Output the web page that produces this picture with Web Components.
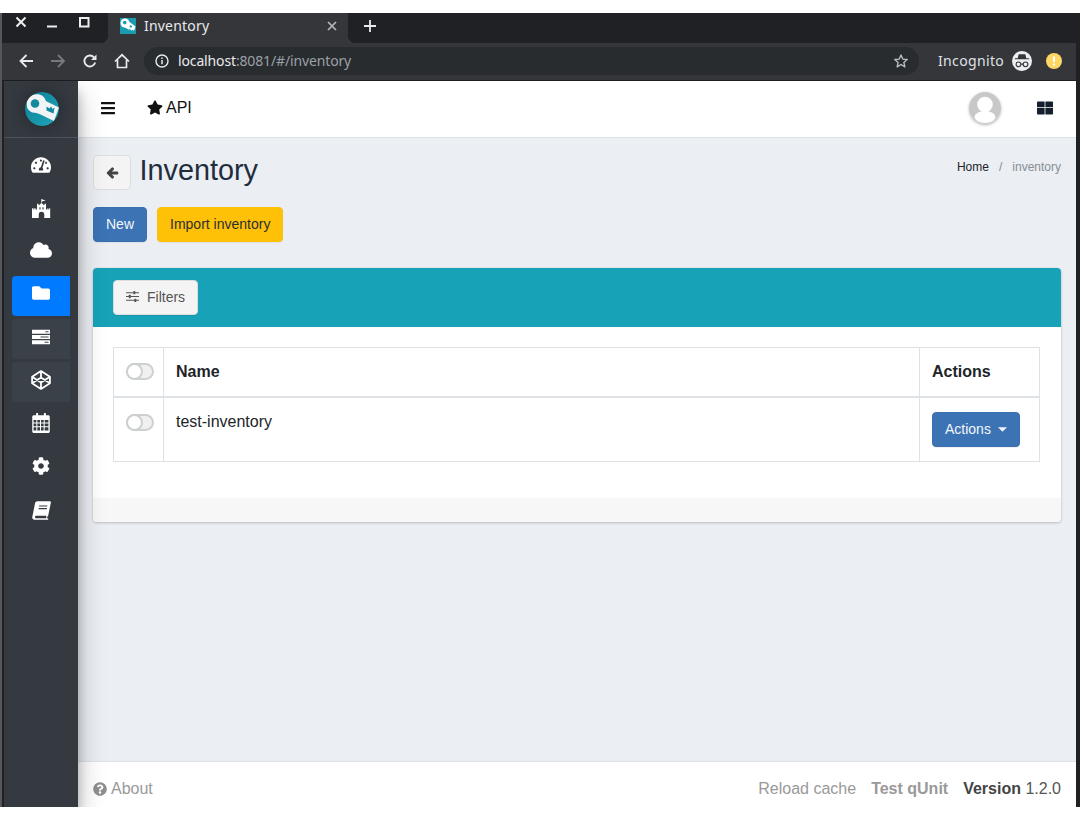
<!DOCTYPE html>
<html lang="en">
<head>
<meta charset="utf-8">
<title>Inventory</title>
<style>
  html, body { margin: 0; padding: 0; height: 820px; background: #fff; overflow: hidden; }
  body { font-family: "Liberation Sans", Arial, sans-serif; font-size: 16px; color: #212529; }
</style>
</head>
<body>
<browser-frame>
  <admin-layout>
    <side-nav slot="side">
      <nav-item icon="gauge"></nav-item>
      <nav-item icon="fort"></nav-item>
      <nav-item icon="cloud"></nav-item>
      <nav-item icon="folder" active></nav-item>
      <nav-item icon="server" tinted></nav-item>
      <nav-item icon="codepen" tinted></nav-item>
      <nav-item icon="calendar"></nav-item>
      <nav-item icon="cog"></nav-item>
      <nav-item icon="book"></nav-item>
    </side-nav>
    <top-nav slot="top"></top-nav>
    <page-heading title="Inventory" crumb="inventory"></page-heading>
    <action-bar>
      <ui-button variant="primary">New</ui-button>
      <ui-button variant="warning">Import inventory</ui-button>
    </action-bar>
    <inventory-card></inventory-card>
    <page-footer slot="bottom"></page-footer>
  </admin-layout>
</browser-frame>

<script>
const ICONS = {
  bars: ['0 0 448 512', '<path d="M16 132h416c8.837 0 16-7.163 16-16V76c0-8.837-7.163-16-16-16H16C7.163 60 0 67.163 0 76v40c0 8.837 7.163 16 16 16zm0 160h416c8.837 0 16-7.163 16-16v-40c0-8.837-7.163-16-16-16H16c-8.837 0-16 7.163-16 16v40c0 8.837 7.163 16 16 16zm0 160h416c8.837 0 16-7.163 16-16v-40c0-8.837-7.163-16-16-16H16c-8.837 0-16 7.163-16 16v40c0 8.837 7.163 16 16 16z"/>'],
  star: ['0 0 576 512', '<path d="M259.3 17.8L194 150.2 47.9 171.5c-26.2 3.8-36.7 36.1-17.7 54.6l105.7 103-25 145.5c-4.5 26.3 23.2 46 46.4 33.7L288 439.6l130.7 68.7c23.2 12.2 50.9-7.4 46.4-33.7l-25-145.5 105.7-103c19-18.5 8.5-50.8-17.7-54.6L382 150.2 316.7 17.8c-11.7-23.6-45.6-23.9-57.4 0z"/>'],
  back: ['0 0 448 512', '<path stroke="currentColor" stroke-width="46" d="M257.5 445.1l-22.2 22.2c-9.4 9.4-24.6 9.4-33.9 0L7 273c-9.4-9.4-9.4-24.6 0-33.9L201.4 44.7c9.4-9.4 24.6-9.4 33.9 0l22.2 22.2c9.5 9.5 9.3 25-.4 34.3L136.6 216H424c13.3 0 24 10.7 24 24v32c0 13.3-10.7 24-24 24H136.6l120.5 114.8c9.8 9.3 10 24.8.4 34.3z"/>'],
  folder: ['0 0 512 512', '<path d="M464 128H272l-64-64H48C21.49 64 0 85.49 0 112v288c0 26.51 21.49 48 48 48h416c26.51 0 48-21.49 48-48V176c0-26.51-21.49-48-48-48z"/>'],
  cloud: ['0 0 640 512', '<path d="M537.6 226.6c4.1-10.7 6.4-22.4 6.4-34.6 0-53-43-96-96-96-19.7 0-38.1 6-53.3 16.2C367 64.2 315.3 32 256 32c-88.4 0-160 71.6-160 160 0 2.7.1 5.4.2 8.1C40.2 219.8 0 273.2 0 336c0 79.5 64.5 144 144 144h368c70.7 0 128-57.3 128-128 0-61.9-44-113.6-102.4-125.4z"/>'],
  gauge: ['0 0 576 512', '<path d="M288 32C128.94 32 0 160.94 0 320c0 52.8 14.25 102.26 39.06 144.8 5.61 9.62 16.3 15.2 27.44 15.2h443c11.14 0 21.83-5.58 27.44-15.2C561.75 422.26 576 372.8 576 320c0-159.06-128.94-288-288-288zm0 64c14.71 0 26.58 10.13 30.32 23.65-1.11 2.26-2.64 4.23-3.45 6.67l-9.22 27.67c-5.13 3.49-10.97 6.01-17.64 6.01-17.67 0-32-14.33-32-32S270.33 96 288 96zM96 384c-17.67 0-32-14.33-32-32s14.33-32 32-32 32 14.33 32 32-14.33 32-32 32zm48-160c-17.67 0-32-14.33-32-32s14.33-32 32-32 32 14.33 32 32-14.33 32-32 32zm246.77-72.41l-61.33 184C343.13 347.33 352 364.54 352 384c0 11.72-3.38 22.55-8.88 32H232.88c-5.5-9.45-8.88-20.28-8.88-32 0-33.94 26.5-61.43 59.9-63.59l61.34-184.01c4.17-12.56 17.73-19.45 30.36-15.17 12.57 4.19 19.35 17.79 15.17 30.36zm14.66 57.2l15.52-46.55c3.47-1.29 7.13-2.23 11.05-2.23 17.67 0 32 14.33 32 32s-14.33 32-32 32c-11.38-.01-20.89-6.28-26.57-15.22zM480 384c-17.67 0-32-14.33-32-32s14.33-32 32-32 32 14.33 32 32-14.33 32-32 32z"/>'],
  cog: ['0 0 512 512', '<path d="M487.4 315.7l-42.6-24.6c4.3-23.2 4.3-47 0-70.2l42.6-24.6c4.9-2.8 7.1-8.6 5.5-14-11.1-35.6-30-67.8-54.7-94.6-3.8-4.1-10-5.1-14.8-2.3L380.8 110c-17.9-15.4-38.5-27.3-60.8-35.1V25.8c0-5.6-3.9-10.5-9.4-11.7-36.7-8.2-74.3-7.8-109.2 0-5.5 1.2-9.4 6.1-9.4 11.7V75c-22.2 7.9-42.8 19.8-60.8 35.1L88.7 85.5c-4.9-2.8-11-1.9-14.8 2.3-24.7 26.7-43.6 58.9-54.7 94.6-1.7 5.4.6 11.2 5.5 14L67.3 221c-4.3 23.2-4.3 47 0 70.2l-42.6 24.6c-4.9 2.8-7.1 8.6-5.5 14 11.1 35.6 30 67.8 54.7 94.6 3.8 4.1 10 5.1 14.8 2.3l42.6-24.6c17.9 15.4 38.5 27.3 60.8 35.1v49.2c0 5.6 3.9 10.5 9.4 11.7 36.7 8.2 74.3 7.8 109.2 0 5.5-1.2 9.4-6.1 9.4-11.7v-49.2c22.2-7.9 42.8-19.8 60.8-35.1l42.6 24.6c4.9 2.8 11 1.9 14.8-2.3 24.7-26.7 43.6-58.9 54.7-94.6 1.5-5.5-.7-11.3-5.6-14.1zM256 336c-44.1 0-80-35.9-80-80s35.9-80 80-80 80 35.9 80 80-35.9 80-80 80z"/>'],
  question: ['0 0 512 512', '<path d="M504 256c0 136.997-111.043 248-248 248S8 392.997 8 256C8 119.083 119.043 8 256 8s248 111.083 248 248zM262.655 90c-54.497 0-89.255 22.957-116.549 63.758-3.536 5.286-2.353 12.415 2.715 16.258l34.699 26.31c5.205 3.947 12.621 3.008 16.665-2.122 17.864-22.658 30.113-35.797 57.303-35.797 20.429 0 45.698 13.148 45.698 32.958 0 14.976-12.363 22.667-32.534 33.976C247.128 238.528 216 254.941 216 296v4c0 6.627 5.373 12 12 12h56c6.627 0 12-5.373 12-12v-1.333c0-28.462 83.186-29.647 83.186-106.667 0-58.002-60.165-102-116.531-102zM256 338c-25.365 0-46 20.635-46 46 0 25.364 20.635 46 46 46s46-20.636 46-46c0-25.365-20.635-46-46-46z"/>'],
  grid: ['0 0 512 512', '<path d="M0 72c0-13 11-24 24-24h196c13 0 24 11 24 24v150H0zM268 48h220c13 0 24 11 24 24v150H268zM0 246h244v218H24c-13 0-24-11-24-24zM268 246h244v194c0 13-11 24-24 24H268z"/>'],
  fort: ['0 0 512 512', '<path fill-rule="evenodd" d="M0 512V250h36v30h24v-30h36v30h39V130h40v30h35v-30h40V0h16v10l100 30-100 30v60h36v30h36v-30h40v150h38v-30h24v30h24v-30h26v262H330V420a74 74 0 0 0-148 0v92zM200 220v60h30v-60zM282 220v60h30v-60z"/>'],
  server: ['0 0 512 512', '<path fill-rule="evenodd" d="M0 50h512v112H0zM0 200h512v112H0zM0 350h512v112H0zM380 92v28h90V92zM240 242v28h230v-28zM360 392v28h110v-28z"/>'],
  codepen: ['0 0 512 512', '<path fill="none" stroke="currentColor" stroke-width="46" stroke-linejoin="round" d="M256 28L484 172V340L256 484L28 340V172zM28 172L256 318L484 172M28 340L256 194L484 340M256 28V194M256 318V484"/>'],
  calendar: ['0 0 448 512', '<path fill-rule="evenodd" d="M100 0h50v60h148V0h50v60h60c22 0 40 18 40 40v372c0 22-18 40-40 40H40c-22 0-40-18-40-40V100c0-22 18-40 40-40h60zM34 176v70h70v-70zM130 176v70h68v-70zM224 176v70h68v-70zM318 176v70h96v-70zM34 270v70h70v-70zM130 270v70h68v-70zM224 270v70h68v-70zM318 270v70h96v-70zM34 364v76c0 5 3 8 8 8h62v-84zM130 364v84h68v-84zM224 364v84h68v-84zM318 364v84h88c5 0 8-3 8-8v-76z"/>'],
  book: ['0 0 512 512', '<path fill-rule="evenodd" d="M150 10h330c22 0 32 14 28 36l-72 350c-3 14-10 22-22 26-12 8-14 30-6 44h18c16 0 20 40 0 40H70C26 506 0 470 8 430L80 70c8-36 34-60 70-60zM190 120v30h220l6-30zM178 190v30h220l6-30zM112 400c-34 0-46 66 0 66h278c-10-20-8-46 2-66z"/>'],
  sliders: ['0 0 512 512', '<g stroke="currentColor" stroke-width="42"><path d="M0 105h512M0 256h512M0 407h512"/></g><rect x="290" y="40" width="76" height="130" rx="14"/><rect x="110" y="191" width="76" height="130" rx="14"/><rect x="330" y="342" width="76" height="130" rx="14"/>'],
  caret: ['0 0 12 6', '<path d="M0 0h12L6 6z"/>'],
};

class FaIcon extends HTMLElement {
  connectedCallback() {
    const [box, body] = ICONS[this.getAttribute('name')];
    this.attachShadow({ mode: 'open' }).innerHTML = `
      <style>
        :host { display: inline-flex; align-items: center; justify-content: center; line-height: 0; }
        svg { width: 100%; height: 100%; fill: currentColor; display: block; overflow: visible; }
      </style>
      <svg viewBox="${box}" aria-hidden="true">${body}</svg>`;
  }
}

class BrowserFrame extends HTMLElement {
  constructor() {
    super();
    this.attachShadow({ mode: 'open' }).innerHTML = `
      <style>
        :host {
          display: flex; flex-direction: column;
          box-sizing: border-box; height: 794px; margin-top: 13px;
          background: #202124; border-left: 2px solid #55575a;
          padding: 0 4px 0 2px;
          font-family: "Noto Sans", sans-serif; color: #e8eaed;
        }
        .strip { display: flex; height: 30px; flex: none; margin-left: -2px; }
        .win { display: flex; width: 106px; flex: none; }
        .tab {
          width: 240px; background: #35363a; position: relative;
          display: flex; align-items: center; box-sizing: border-box; padding: 0 11px 5px 12px;
          font-size: 14px; letter-spacing: .2px;
        }
        .tab::before, .tab::after {
          content: ""; position: absolute; bottom: 0; width: 8px; height: 8px;
        }
        .tab::before { left: -8px; background: radial-gradient(circle at 0 0, transparent 8px, #35363a 8.500px); }
        .tab::after { right: -8px; background: radial-gradient(circle at 100% 0, transparent 8px, #35363a 8.500px); }
        .tab span { flex: 1; margin-left: 8px; }
        .plus { margin: 7px 0 0 16px; }
        .bar {
          height: 38px; flex: none; background: #35363a; margin-left: -2px;
          border-bottom: 1px solid #1c1d1f; padding-bottom: 1px;
          display: flex; align-items: center; box-sizing: border-box;
        }
        .bar > svg { flex: none; }
        .omni {
          flex: none; width: 775px; height: 28px; margin-left: 14px; border-radius: 14px;
          background: #292c2f; display: flex; align-items: center; box-sizing: border-box;
          padding: 0 10px 0 11px; font-size: 14px; color: #9aa0a6; letter-spacing: -.14px;
        }
        .omni b { font-weight: 400; color: #e8eaed; }
        .url { flex: 1; margin-left: 9px; padding-bottom: 1px; }
        .who { margin-left: 19px; font-size: 14px; letter-spacing: .35px; color: #dfe1e5; padding-bottom: 1px; }
        .app { flex: 1; min-height: 0; display: flex; }
        ::slotted(*) { flex: 1; min-width: 0; }
      </style>
      <div class="strip">
        <div class="win">
          <svg width="12" height="12" viewBox="0 0 12 12" style="margin:3px 0 0 13px"><path d="M1.500 1.500l9 9M10.500 1.500l-9 9" stroke="#eee" stroke-width="2" fill="none"/></svg>
          <svg width="12" height="12" viewBox="0 0 12 12" style="margin:3px 0 0 19px"><path d="M1 10.500h10" stroke="#eee" stroke-width="2" fill="none"/></svg>
          <svg width="11" height="11" viewBox="0 0 11 11" style="margin:4px 0 0 21px"><rect x="1" y="1" width="8.500" height="8.500" stroke="#eee" stroke-width="2" fill="none"/></svg>
        </div>
        <div class="tab">
          <svg width="16" height="16" viewBox="0 0 16 16">
            <rect width="16" height="16" fill="#1a9bb2"/>
            <path d="M7.500 2.500L15.500 8.500 14 12.800 12.600 11.700 11.500 12.800 10 11 8.800 11.700 4.500 9.200z" fill="#fff"/>
            <circle cx="5" cy="5" r="4.500" fill="#fff"/>
            <circle cx="4.700" cy="4.600" r="1.800" fill="#1a9bb2"/>
            <circle cx="10.800" cy="8.400" r="1.200" fill="#1a9bb2"/>
          </svg>
          <span>Inventory</span>
          <svg width="10" height="10" viewBox="0 0 10 10"><path d="M1 1l8 8M9 1L1 9" stroke="#b5b8bb" stroke-width="1.700" fill="none"/></svg>
        </div>
        <svg class="plus" width="12" height="12" viewBox="0 0 12 12"><path d="M6 0v12M0 6h12" stroke="#e8eaed" stroke-width="1.800" fill="none"/></svg>
      </div>
      <div class="bar">
        <svg width="16" height="16" viewBox="0 0 16 16" style="margin-left:16px"><path d="M15 8H3M8.500 2L2.500 8l6 6" stroke="#e8eaed" stroke-width="1.800" fill="none"/></svg>
        <svg width="16" height="16" viewBox="0 0 16 16" style="margin-left:16px"><path d="M1 8h13M8 2l6 6-6 6" stroke="#77797c" stroke-width="1.800" fill="none"/></svg>
        <svg width="16" height="16" viewBox="0 0 16 16" style="margin-left:16px"><path d="M13.200 9.500A5.500 5.500 0 1 1 12 4.300" stroke="#e8eaed" stroke-width="1.800" fill="none"/><path d="M14.500 1.500v5.500H9z" fill="#e8eaed"/></svg>
        <svg width="16" height="16" viewBox="0 0 16 16" style="margin-left:16px"><path d="M1 8.500L8 1.800l7 6.700M3.500 7v7.500h9V7" stroke="#e8eaed" stroke-width="1.700" fill="none"/></svg>
        <div class="omni">
          <svg width="14" height="14" viewBox="0 0 14 14"><circle cx="7" cy="7" r="6" stroke="#e8eaed" stroke-width="1.400" fill="none"/><path d="M7 6v4.300M7 3.400v1.500" stroke="#e8eaed" stroke-width="1.500"/></svg>
          <div class="url"><b>localhost</b>:8081/#/inventory</div>
          <svg width="16" height="16" viewBox="0 0 24 24"><path d="M12 3l2.700 6.100 6.600.7-5 4.400 1.500 6.500L12 17.300l-5.800 3.400 1.500-6.500-5-4.400 6.600-.7z" stroke="#bdc1c6" stroke-width="2" fill="none" stroke-linejoin="round"/></svg>
        </div>
        <div class="who">Incognito</div>
        <svg width="20" height="20" viewBox="0 0 21 21" style="margin-left:8px">
          <circle cx="10.500" cy="10.500" r="10.500" fill="#eceef0"/>
          <path d="M7 3.500h7l1 4h3v1.200H3V7.500h3z" fill="#35363a"/>
          <circle cx="6.800" cy="14" r="2.500" fill="none" stroke="#35363a" stroke-width="1.200"/>
          <circle cx="14.200" cy="14" r="2.500" fill="none" stroke="#35363a" stroke-width="1.200"/>
          <path d="M9.300 13.800h2.400" stroke="#35363a" stroke-width="1.200"/>
        </svg>
        <svg width="16" height="16" viewBox="0 0 16 16" style="margin-left:14px">
          <circle cx="8" cy="8" r="8" fill="#fdd663"/>
          <path d="M8 3.500v5.500M8 10.500v2" stroke="#fff" stroke-width="2"/>
        </svg>
      </div>
      <div class="app"><slot></slot></div>`;
  }
}

class AdminLayout extends HTMLElement {
  constructor() {
    super();
    this.attachShadow({ mode: 'open' }).innerHTML = `
      <style>
        :host {
          display: grid; grid-template-columns: 74px 1fr; grid-template-rows: 57px 1fr 46px;
          background: #ebeef3; color: #212529; overflow: hidden;
          font-family: "Liberation Sans", Arial, sans-serif; font-size: 16px;
        }
        .side { grid-row: 1 / 4; position: relative; z-index: 2; display: flex; }
        .top { grid-column: 2; display: block; }
        main { grid-column: 2; padding: 17px 15px 0; display: flex; flex-direction: column; min-height: 0; }
        .bottom { grid-column: 2; display: block; }
      </style>
      <div class="side"><slot name="side"></slot></div>
      <div class="top"><slot name="top"></slot></div>
      <main><slot></slot></main>
      <div class="bottom"><slot name="bottom"></slot></div>`;
  }
}

class SideNav extends HTMLElement {
  constructor() {
    super();
    this.attachShadow({ mode: 'open' }).innerHTML = `
      <style>
        :host {
          display: flex; flex-direction: column; width: 74px; background: #343a40;
          box-shadow: 0 14px 28px rgba(0,0,0,.25), 0 10px 10px rgba(0,0,0,.22);
        }
        .brand {
          height: 56px; flex: none; border-bottom: 1px solid #4b545c;
          display: flex; align-items: center; justify-content: center;
        }
        svg { border-radius: 50%; box-shadow: 0 0 14px 5px rgba(0,0,0,.18); margin: 0 0 0 2px; }
        nav { padding: 9px 8px 0; display: flex; flex-direction: column; gap: 3px; }
      </style>
      <div class="brand">
        <svg width="34" height="34" viewBox="0 0 34 34">
          <defs><linearGradient id="g" x1="0" y1="0" x2="1" y2="1"><stop offset="0" stop-color="#0f7f92"/><stop offset="1" stop-color="#1da6bc"/></linearGradient></defs>
          <circle cx="17" cy="17" r="17" fill="url(#g)"/>
          <path d="M1.700 12C2 5.500 7 1.700 13 2.300c4 .5 7 3 7.800 6.700L34 15.500 29 29 15 22.300l-3.500-1.300C6 21 1.500 18 1.700 12z" fill="#f1f3f4"/>
          <circle cx="10" cy="11.500" r="4.300" fill="#12899d"/>
          <path d="M21.500 14.500l3 2 1.500-2 1.500 2.500 2-1.500-1 6-7-3z" fill="#12899d"/>
        </svg>
      </div>
      <nav><slot></slot></nav>`;
  }
}

// width, height, top padding of each sidebar icon
const NAV_ICONS = {
  gauge: [20, 18, 9], fort: [19, 19, 9], cloud: [22, 18, 8], folder: [18, 18, 8],
  server: [20, 18, 9], codepen: [20, 20, 8], calendar: [18, 20, 8], cog: [18, 18, 9], book: [19, 19, 10],
};

class NavItem extends HTMLElement {
  connectedCallback() {
    const name = this.getAttribute('icon');
    const [w, h, pad] = NAV_ICONS[name];
    this.attachShadow({ mode: 'open' }).innerHTML = `
      <style>
        :host {
          display: flex; justify-content: center; align-items: flex-start; box-sizing: border-box;
          width: 58px; height: 40px; border-radius: 4px 0 0 4px; color: #fff;
          padding-top: ${pad}px;
        }
        :host([active]) { background: #007bff; }
        :host([tinted]) { background: #3b4148; }
        fa-icon { width: ${w}px; height: ${h}px; }
      </style>
      <fa-icon name="${name}"></fa-icon>`;
  }
}

class TopNav extends HTMLElement {
  constructor() {
    super();
    this.attachShadow({ mode: 'open' }).innerHTML = `
      <style>
        :host {
          display: flex; align-items: center; box-sizing: border-box; height: 57px;
          background: #fff; border-bottom: 1px solid #dee2e6; color: #111;
          padding: 0 23px 3px 23px;
        }
        .menu { width: 14px; height: 16px; }
        .star { width: 16px; height: 15px; margin-left: 32px; }
        .api { margin-left: 3px; flex: 1; }
        .avatar {
          width: 32px; height: 32px; border-radius: 50%; overflow: hidden;
          box-shadow: 0 1px 3px rgba(0,0,0,.3); margin-right: 36px; display: block;
        }
        .apps { width: 16px; height: 16px; color: #14202e; }
      </style>
      <fa-icon class="menu" name="bars"></fa-icon>
      <fa-icon class="star" name="star"></fa-icon>
      <span class="api">API</span>
      <svg class="avatar" viewBox="0 0 32 32">
        <rect width="32" height="32" fill="#c8c8c8"/>
        <circle cx="16" cy="12.500" r="7.800" fill="#fff"/>
        <ellipse cx="16" cy="25" rx="10.500" ry="6" fill="#fff"/>
      </svg>
      <fa-icon class="apps" name="grid"></fa-icon>`;
  }
}

class PageHeading extends HTMLElement {
  connectedCallback() {
    this.attachShadow({ mode: 'open' }).innerHTML = `
      <style>
        :host { display: flex; align-items: flex-start; height: 52px; flex: none; }
        .back {
          width: 38px; height: 35px; box-sizing: border-box; background: #f4f4f4;
          border: 1px solid #ddd; border-radius: 4px; color: #444;
          display: flex; align-items: center; justify-content: center;
        }
        .back fa-icon { width: 11px; height: 12px; }
        h1 { margin: -3px 0 0 8.500px; font-size: 28.800px; font-weight: 400; line-height: 36px; color: #1f2d3d; flex: 1; }
        ol { list-style: none; margin: 4px 0 0; padding: 0; display: flex; font-size: 12px; line-height: 16px; }
        .home { color: #212529; }
        .sep { color: #868e96; padding: 0 10px; }
        .cur { color: #868e96; }
      </style>
      <div class="back"><fa-icon name="back"></fa-icon></div>
      <h1>${this.getAttribute('title')}</h1>
      <ol>
        <li class="home">Home</li>
        <li class="sep">/</li>
        <li class="cur">${this.getAttribute('crumb')}</li>
      </ol>`;
  }
}

class ActionBar extends HTMLElement {
  constructor() {
    super();
    this.attachShadow({ mode: 'open' }).innerHTML = `
      <style>:host { display: flex; gap: 10px; height: 61px; flex: none; }</style>
      <slot></slot>`;
  }
}

class UiButton extends HTMLElement {
  constructor() {
    super();
    this.attachShadow({ mode: 'open' }).innerHTML = `
      <style>
        :host {
          display: inline-flex; align-items: center; box-sizing: border-box; height: 35px;
          padding: 0 12px 2px; border: 1px solid transparent; border-radius: 4px;
          font-size: 14px; white-space: nowrap; flex: none;
          box-shadow: 0 1px 1px rgba(0,0,0,.06);
        }
        :host([variant="primary"]) { background: #3c73b4; border-color: #3a70b1; color: #f2f6fa; }
        :host([variant="warning"]) { background: #ffc107; border-color: #ffc107; color: #2b2f33; }
        :host([variant="default"]) { background: #f4f4f4; border-color: #ddd; color: #555; }
      </style>
      <slot></slot>`;
  }
}

class ToggleSwitch extends HTMLElement {
  constructor() {
    super();
    this.attachShadow({ mode: 'open' }).innerHTML = `
      <style>
        :host {
          display: block; box-sizing: border-box; width: 28px; height: 17px; border-radius: 9px;
          border: 2px solid #cdd0d0; background: #f0f0f0; position: relative;
        }
        i {
          position: absolute; left: -2px; top: -2px; width: 17px; height: 17px; box-sizing: border-box;
          border-radius: 50%; background: #fff; border: 2px solid #cdd0d0;
        }
      </style>
      <i></i>`;
  }
}

class InventoryCard extends HTMLElement {
  constructor() {
    super();
    this.attachShadow({ mode: 'open' }).innerHTML = `
      <style>
        :host {
          flex: none; height: 254px; background: #fff; border-radius: 4px;
          box-shadow: 0 0 1px rgba(0,0,0,.125), 0 1px 3px rgba(0,0,0,.2); overflow: hidden;
          display: flex; flex-direction: column;
        }
        header { height: 59px; flex: none; background: #17a2b8; padding: 12px 20px; box-sizing: border-box; display: flex; }
        header fa-icon { width: 13px; height: 13px; margin-right: 8px; }
        .body { flex: 1; padding: 20px 21px 0 20px; }
        table { width: 100%; border-collapse: collapse; table-layout: fixed; }
        th, td { border: 1px solid #dee2e6; padding: 0 12px; text-align: left; vertical-align: top; color: #212529; }
        thead th { height: 49px; border-bottom-width: 2px; vertical-align: middle; box-sizing: border-box; }
        tbody td { height: 65px; padding-top: 14px; box-sizing: border-box; line-height: 19px; }
        .chk { width: 50px; box-sizing: border-box; }
        .act { width: 120px; box-sizing: border-box; }
        td.chk { padding-top: 16px; }
        td ui-button { padding-bottom: 0; }
        .caret { width: 9px; height: 5px; margin-left: 7px; }
        footer { height: 24px; flex: none; background: #f7f7f7; }
      </style>
      <header>
        <ui-button variant="default"><fa-icon name="sliders"></fa-icon>Filters</ui-button>
      </header>
      <div class="body">
        <table>
          <thead>
            <tr><th class="chk"><toggle-switch></toggle-switch></th><th>Name</th><th class="act">Actions</th></tr>
          </thead>
          <tbody>
            <tr>
              <td class="chk"><toggle-switch></toggle-switch></td>
              <td>test-inventory</td>
              <td class="act"><ui-button variant="primary">Actions<fa-icon class="caret" name="caret"></fa-icon></ui-button></td>
            </tr>
          </tbody>
        </table>
      </div>
      <footer></footer>`;
  }
}

class PageFooter extends HTMLElement {
  constructor() {
    super();
    this.attachShadow({ mode: 'open' }).innerHTML = `
      <style>
        :host {
          display: flex; align-items: center; box-sizing: border-box; height: 46px;
          background: #fff; border-top: 1px solid #dee2e6; padding: 8px 15px 0 15px; color: #999;
        }
        fa-icon { width: 14px; height: 14px; margin-right: 4px; color: #8f8f8f; }
        .about { flex: 1; display: flex; align-items: center; }
        b { margin-left: 15px; }
        .ver { margin-left: 15px; color: #555; }
        .ver b { margin: 0; color: #444; }
      </style>
      <span class="about"><fa-icon name="question"></fa-icon>About</span>
      <span>Reload cache</span>
      <b>Test qUnit</b>
      <span class="ver"><b>Version</b> 1.2.0</span>`;
  }
}

customElements.define('fa-icon', FaIcon);
customElements.define('browser-frame', BrowserFrame);
customElements.define('admin-layout', AdminLayout);
customElements.define('side-nav', SideNav);
customElements.define('nav-item', NavItem);
customElements.define('top-nav', TopNav);
customElements.define('page-heading', PageHeading);
customElements.define('action-bar', ActionBar);
customElements.define('ui-button', UiButton);
customElements.define('toggle-switch', ToggleSwitch);
customElements.define('inventory-card', InventoryCard);
customElements.define('page-footer', PageFooter);
</script>
</body>
</html>
